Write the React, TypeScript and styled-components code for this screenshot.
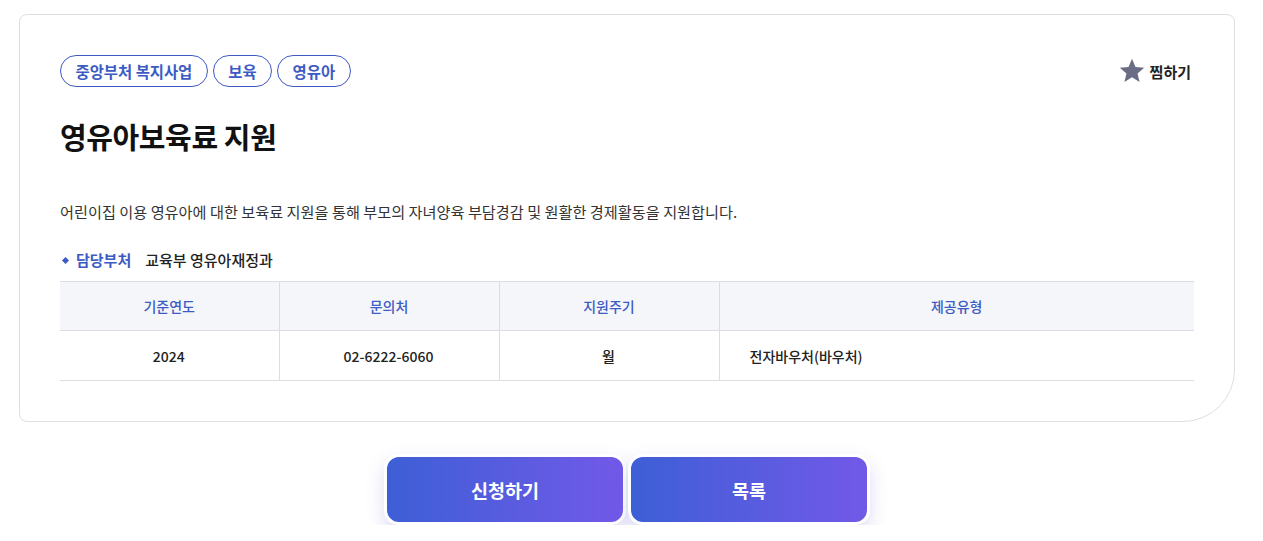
import React from "react";
import styled, { createGlobalStyle } from "styled-components";

const Global = createGlobalStyle`
  html, body { margin: 0; padding: 0; background: #fff; }
  body { font-family: "Noto Sans CJK KR", "Noto Sans", sans-serif; color: #222; }
  * { box-sizing: border-box; }
`;

const Page = styled.div`
  width: 1263px;
  padding: 14px 28px 0 19px;
`;

const Card = styled.section`
  width: 1216px;
  border: 1px solid #dedfe3;
  border-radius: 8px 8px 52px 8px;
  padding: 40px 40px 40px 40px;
  background: #fff;
`;

const TopRow = styled.div`
  display: flex;
  justify-content: space-between;
  align-items: center;
`;

const Tags = styled.div`
  display: flex;
  gap: 5px;
`;

const Tag = styled.span`
  display: inline-flex;
  align-items: center;
  height: 32px;
  padding: 0 14.5px;
  border: 1px solid #3d5bc4;
  border-radius: 16px;
  color: #3d5bc4;
  font-size: 15.4px;
  font-weight: 700;
`;

const Fav = styled.button`
  display: flex;
  align-items: center;
  gap: 5px;
  border: 0;
  background: none;
  padding: 0;
  margin-right: 3px;
  font-family: inherit;
  font-size: 15px;
  font-weight: 700;
  color: #222;
  cursor: pointer;
`;

const Title = styled.h1`
  margin: 29px 0 0;
  font-size: 29px;
  font-weight: 700;
  color: #111;
  letter-spacing: -0.4px;
  line-height: 40px;
`;

const Desc = styled.p`
  margin: 43px 0 0;
  font-size: 15.2px;
  line-height: 24px;
  color: #333;
`;

const Dept = styled.div`
  display: flex;
  align-items: center;
  margin-top: 25px;
  font-size: 15px;
  line-height: 24px;
`;

const Bullet = styled.span`
  width: 5px;
  height: 5px;
  background: #3d5bc4;
  transform: rotate(45deg);
  margin: 0 8px 0 3px;
`;

const DeptLabel = styled.span`
  color: #3d5bc4;
  font-weight: 700;
  margin-right: 14px;
`;

const DeptValue = styled.span`
  color: #222;
  font-weight: 500;
`;

const Table = styled.table`
  width: 100%;
  margin-top: 9px;
  border-collapse: collapse;
  table-layout: fixed;
  font-size: 14px;
`;

const Th = styled.th`
  height: 49px;
  background: #f5f6fa;
  border-top: 1px solid #dcdde3;
  border-bottom: 1px solid #dcdde3;
  border-left: 1px solid #dcdde3;
  color: #3d5bc4;
  font-weight: 500;
  text-align: center;
  &:first-child { border-left: 0; }
`;

const Td = styled.td<{ $left?: boolean }>`
  height: 50px;
  border-bottom: 1px solid #dcdde3;
  border-left: 1px solid #dcdde3;
  color: #222;
  font-weight: 500;
  text-align: ${(p) => (p.$left ? "left" : "center")};
  padding-left: ${(p) => (p.$left ? "30px" : "0")};
  &:first-child { border-left: 0; }
`;

const Actions = styled.div`
  width: 1216px;
  display: flex;
  justify-content: center;
  gap: 2px;
  margin-top: 32px;
`;

const ActionButton = styled.button`
  width: 242px;
  height: 71px;
  border: 3px solid #fff;
  border-radius: 15px;
  background: linear-gradient(90deg, #3d5fd6 0%, #7259e8 100%);
  color: #fff;
  font-family: inherit;
  font-size: 18.5px;
  font-weight: 700;
  box-shadow: 0 8px 18px rgba(96, 96, 210, 0.22);
  cursor: pointer;
`;

const Star = () => (
  <svg width="26" height="26" viewBox="0 0 24 24" aria-hidden>
    <path
      d="M12 0.8l3.2 7.5 8.1.6-6.2 5.3 1.9 7.9L12 17.8 5 22.1l1.9-7.9L0.7 8.9l8.1-.6z"
      fill="#6a6d85"
    />
  </svg>
);

export default function App() {
  return (
    <>
      <Global />
      <Page>
        <Card>
          <TopRow>
            <Tags>
              <Tag>중앙부처 복지사업</Tag>
              <Tag>보육</Tag>
              <Tag>영유아</Tag>
            </Tags>
            <Fav>
              <Star />
              찜하기
            </Fav>
          </TopRow>
          <Title>영유아보육료 지원</Title>
          <Desc>
            어린이집 이용 영유아에 대한 보육료 지원을 통해 부모의 자녀양육 부담경감 및 원활한 경제활동을 지원합니다.
          </Desc>
          <Dept>
            <Bullet />
            <DeptLabel>담당부처</DeptLabel>
            <DeptValue>교육부 영유아재정과</DeptValue>
          </Dept>
          <Table>
            <colgroup>
              <col style={{ width: 219 }} />
              <col style={{ width: 220 }} />
              <col style={{ width: 220 }} />
              <col />
            </colgroup>
            <thead>
              <tr>
                <Th>기준연도</Th>
                <Th>문의처</Th>
                <Th>지원주기</Th>
                <Th>제공유형</Th>
              </tr>
            </thead>
            <tbody>
              <tr>
                <Td>2024</Td>
                <Td>02-6222-6060</Td>
                <Td>월</Td>
                <Td $left>전자바우처(바우처)</Td>
              </tr>
            </tbody>
          </Table>
        </Card>
        <Actions>
          <ActionButton>신청하기</ActionButton>
          <ActionButton>목록</ActionButton>
        </Actions>
      </Page>
    </>
  );
}
